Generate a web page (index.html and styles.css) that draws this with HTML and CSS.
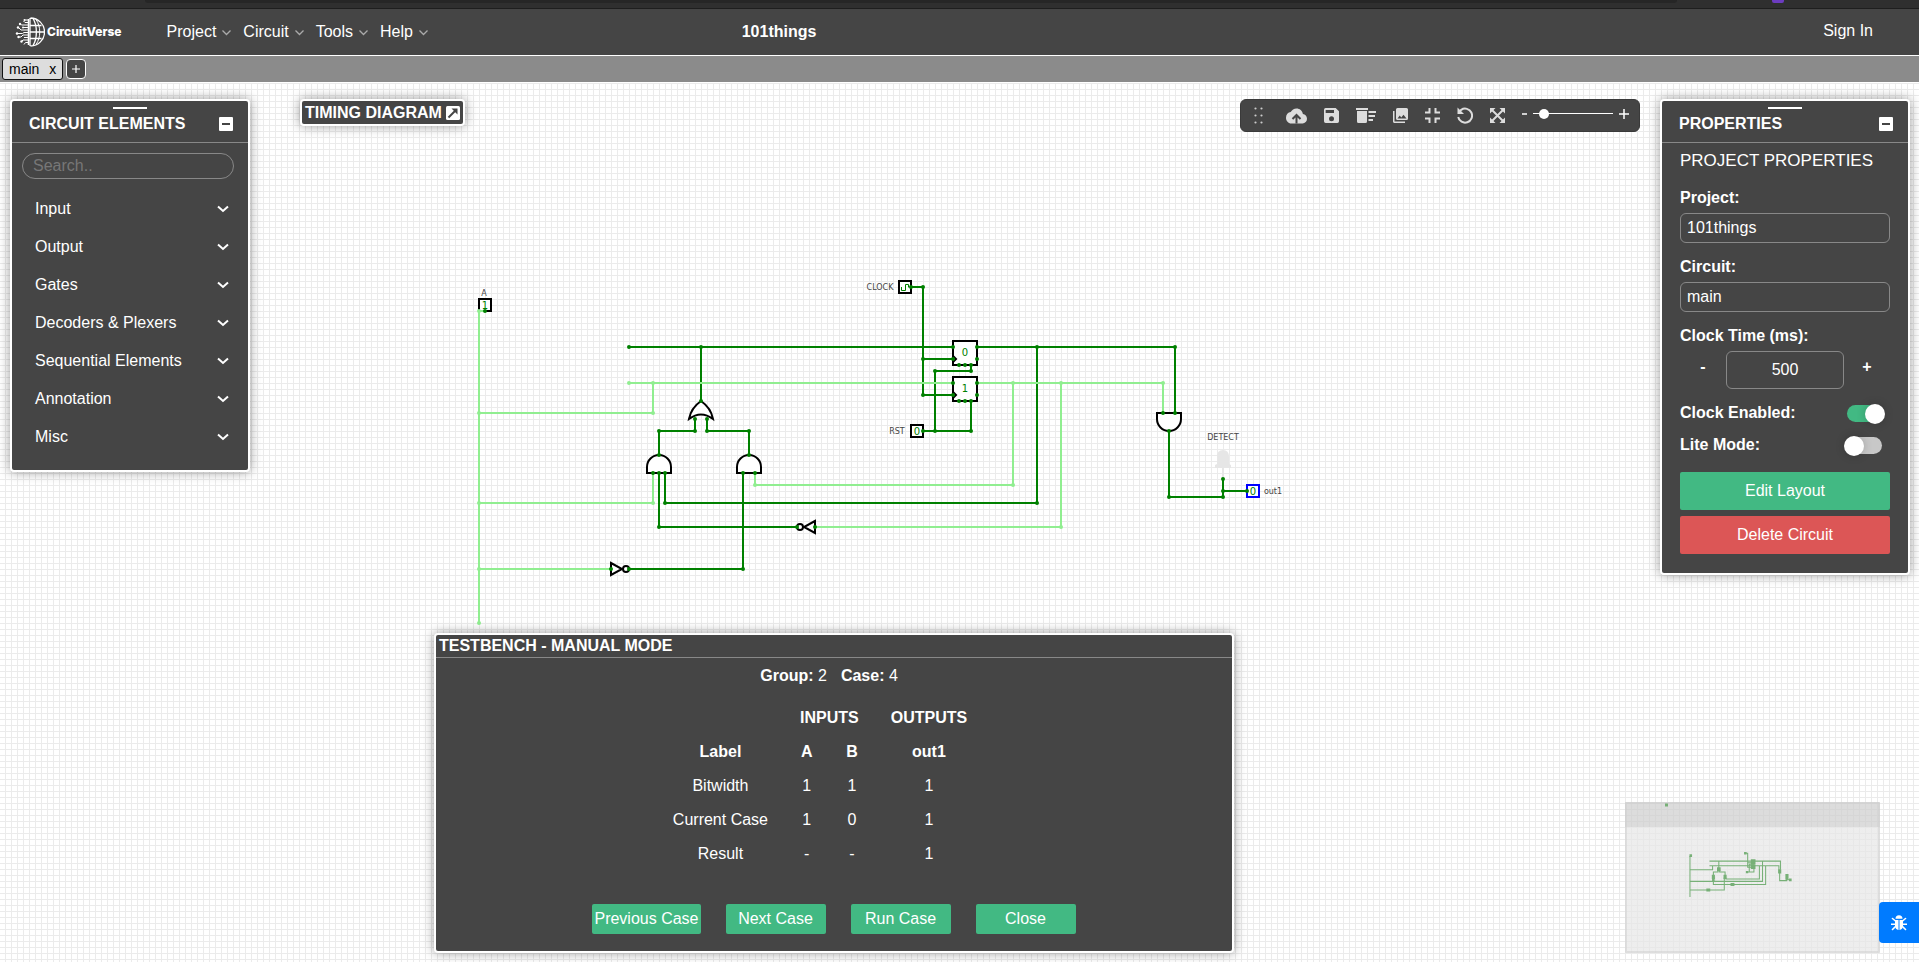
FILE: index.html
```html
<!DOCTYPE html>
<html lang="en">
<head>
<meta charset="utf-8">
<title>101things - CircuitVerse</title>
<link rel="stylesheet" href="styles.css">
</head>
<body>
<div class="chrome"><span class="chrome-bar"></span><span class="chrome-mark"></span></div>
<header class="navbar">
  <div class="nav-left">
    <a class="logo" href="#">
      <svg width="30" height="30" viewBox="0 0 30 30" fill="none" stroke="#fff">
        <path d="M15 1v28M15.500 1a14 14 0 0 1 0 28M18 1.500c4.500 7 4.500 20 0 27M15 8.500h11.500M15 15h14M15 21.500h11.500" stroke-width="1.300"/>
        <path d="M21 2.500c5 7 5 18 0 25" stroke-width="1"/>
        <path d="M13.500 2v26" stroke-width="1.500"/>
        <path d="M13 3H9.500M13 5.500H10L8.500 4M13 8H6.500L5 6.500M13 10.500H8M13 13H6L3.500 10.500H2M13 15.500H9L7.500 16.500H1M13 18H8L6 20H3M13 20.500H9M13 23H8L6.500 24.500M13 25.500H10.500L9 27.500"/>
        <g fill="#fff" stroke="none"><circle cx="9.500" cy="3" r="1"/><circle cx="5" cy="7" r="1.200"/><circle cx="3" cy="10.500" r="1.200"/><circle cx="2" cy="16.500" r="1.200"/><circle cx="3.500" cy="20" r="1.200"/><circle cx="6.500" cy="24.500" r="1.200"/><circle cx="8" cy="10.500" r="1"/></g>
      </svg>
      <span>CircuitVerse</span>
    </a>
    <nav class="menu">
      <button type="button">Project<svg class="caret" viewBox="0 0 9 6"><path d="M.5.500l4 4 4-4"/></svg></button>
      <button type="button">Circuit<svg class="caret" viewBox="0 0 9 6"><path d="M.5.500l4 4 4-4"/></svg></button>
      <button type="button">Tools<svg class="caret" viewBox="0 0 9 6"><path d="M.5.500l4 4 4-4"/></svg></button>
      <button type="button">Help<svg class="caret" viewBox="0 0 9 6"><path d="M.5.500l4 4 4-4"/></svg></button>
    </nav>
  </div>
  <h1 class="project-name">101things</h1>
  <a class="sign-in" href="#">Sign In</a>
</header>
<div class="tabs">
  <div class="tab"><span>main</span><button type="button" aria-label="Close main">x</button></div>
  <button class="tab-add" type="button" aria-label="Add circuit"><svg width="10" height="10" viewBox="0 0 10 10"><path d="M5 1v8M1 5h8" stroke="#fff" stroke-width="1.200"/></svg></button>
</div>
<main class="workspace">
  <svg class="circuit">
    <defs>
      <path id="wires-light" d="M485 311H479V623M479 413H653V383M629 383H953M977 383H1163V413M479 503H653V473M479 569H611M755 473V485H1013V383M815 527H1061V383"/>
      <path id="wires-dark" d="M629 347H953M977 347H1175V413M701 347V401M695 419V431H659V455M707 419V431H749V455M665 473V503H1037V347M659 473V527H797M629 569H743V473M911 287H923V395H953M923 359H953M971 365V371H935V431M923 431H971V401M1169 431V497H1223V479M1223 491H1247"/>
    </defs>
    <g transform="translate(0 -83)">
      <g class="part">
        <rect x="479" y="299" width="12" height="12"/>
        <rect x="899" y="281" width="12" height="12"/>
        <rect x="911" y="425" width="12" height="12"/>
        <rect x="953" y="341" width="24" height="24"/>
        <rect x="953" y="377" width="24" height="24"/>
        <path d="M953 356l3 3-3 3M953 392l3 3-3 3"/>
        <path d="M689 419q12-9 24 0-2-11-12-18-10 7-12 18z"/>
        <path d="M647 473V467a12 12 0 0 1 24 0V473z"/>
        <path d="M737 473V467a12 12 0 0 1 24 0V473z"/>
        <path d="M1157 413V419a12 12 0 0 0 24 0V413z"/>
        <path d="M611 563l11 6-11 6z"/><circle cx="626" cy="569" r="3"/>
        <path d="M815 521l-11 6 11 6z"/><circle cx="800" cy="527" r="3"/>
        <rect class="selected" x="1247" y="485" width="12" height="12"/>
      </g>
      <path class="clock-wave" d="M901.500 287v3.500h4v-6h3v3"/>
      <path d="M1217 464v-7q0-7 6-7t6 7v7l2 1v3h-16v-3z" fill="#e6e6e6"/><path d="M1223 468v10" stroke="#e6e6e6" stroke-width="2"/>
      <use href="#wires-dark" class="wire dark"/>
      <use href="#wires-light" class="wire light"/>
      <path class="node light" d="M479 311h0M479 413h0M479 503h0M479 569h0M479 623h0M629 383h0M653 383h0M653 413h0M653 503h0M755 485h0M1013 485h0M1013 383h0M1061 383h0M1061 527h0M1163 383h0"/>
      <path class="node dark" d="M485 311h0M629 347h0M701 347h0M701 401h0M695 419h0M707 419h0M695 431h0M707 431h0M659 431h0M749 431h0M659 455h0M749 455h0M653 473h0M659 473h0M665 473h0M743 473h0M755 473h0M665 503h0M659 527h0M797 527h0M815 527h0M611 569h0M629 569h0M743 569h0M911 287h0M923 287h0M923 359h0M923 395h0M953 347h0M953 359h0M953 383h0M953 395h0M977 347h0M977 359h0M977 383h0M977 395h0M959 365h0M965 365h0M971 365h0M959 401h0M965 401h0M971 401h0M971 371h0M935 371h0M935 431h0M923 431h0M971 431h0M1037 347h0M1037 503h0M1175 347h0M1175 413h0M1163 413h0M1169 431h0M1169 497h0M1223 497h0M1223 491h0M1223 479h0M1247 491h0"/>
      <g class="value">
        <text x="485" y="309">1</text><text x="965" y="356">0</text><text x="965" y="392">1</text><text x="917" y="435">0</text><text x="1253" y="495">0</text>
      </g>
      <g class="name">
        <text x="484" y="296">A</text><text x="880" y="290">CLOCK</text><text x="897" y="434">RST</text><text x="1223" y="440">DETECT</text><text x="1273" y="494">out1</text>
      </g>
    </g>
  </svg>

  <section class="panel elements">
    <header class="panel-head"><h2>CIRCUIT ELEMENTS</h2><button class="fold" type="button" aria-label="Collapse circuit elements"></button></header>
    <input class="search" type="text" placeholder="Search.." aria-label="Search circuit elements">
    <ul class="categories">
      <li><button type="button">Input<svg class="chevron" viewBox="0 0 12 8"><path d="M1 1.500l5 4.500 5-4.500"/></svg></button></li>
      <li><button type="button">Output<svg class="chevron" viewBox="0 0 12 8"><path d="M1 1.500l5 4.500 5-4.500"/></svg></button></li>
      <li><button type="button">Gates<svg class="chevron" viewBox="0 0 12 8"><path d="M1 1.500l5 4.500 5-4.500"/></svg></button></li>
      <li><button type="button">Decoders &amp; Plexers<svg class="chevron" viewBox="0 0 12 8"><path d="M1 1.500l5 4.500 5-4.500"/></svg></button></li>
      <li><button type="button">Sequential Elements<svg class="chevron" viewBox="0 0 12 8"><path d="M1 1.500l5 4.500 5-4.500"/></svg></button></li>
      <li><button type="button">Annotation<svg class="chevron" viewBox="0 0 12 8"><path d="M1 1.500l5 4.500 5-4.500"/></svg></button></li>
      <li><button type="button">Misc<svg class="chevron" viewBox="0 0 12 8"><path d="M1 1.500l5 4.500 5-4.500"/></svg></button></li>
    </ul>
  </section>

  <section class="panel timing">
    <h2>TIMING DIAGRAM</h2>
    <button type="button" aria-label="Open timing diagram"><svg width="14" height="14" viewBox="0 0 14 14"><rect width="14" height="14" rx="1.500" fill="#fff"/><path d="M2.500 11.500l7-7" stroke="#454545" stroke-width="2"/><path d="M5.500 2.500h6v6z" fill="#454545"/></svg></button>
  </section>

  <div class="toolbar">
    <svg class="grip" width="9" height="17" viewBox="0 0 9 17"><path d="M1.500 1.500h0M7.500 1.500h0M1.500 8.500h0M7.500 8.500h0M1.500 15.500h0M7.500 15.500h0" stroke="#ccc" stroke-width="2.200" stroke-linecap="round"/></svg>
    <button type="button" aria-label="Save online"><svg width="21" height="16" viewBox="0 0 21 16"><path d="M16.900 6C16.300 2.700 13.700.500 10.500.500 8 .500 5.800 2 4.700 4.100 2 4.400 0 6.700 0 9.700 0 12.800 2.400 15.500 5.200 15.500h11.400c2.400 0 4.400-2 4.400-4.700C21 8.300 19.200 6.200 16.900 6z" fill="#ddd"/><path d="M10.500 15.500V8M6.500 11l4-4 4 4" fill="none" stroke="#454545" stroke-width="2"/></svg></button>
    <button type="button" aria-label="Save offline"><svg width="15" height="15" viewBox="3 3 18 18"><path fill="#ddd" d="M17 3H5a2 2 0 0 0-2 2v14a2 2 0 0 0 2 2h14a2 2 0 0 0 2-2V7l-4-4zm-5 16a3 3 0 1 1 0-6 3 3 0 0 1 0 6zm3-10H5V5.500h10V9z"/></svg></button>
    <button type="button" aria-label="Delete selected"><svg width="20" height="15" viewBox="0 0 20 15" fill="#ddd"><path d="M0 0h12v2H0zM1 3h10v10.500q0 1.500-1.500 1.500h-7Q1 15 1 13.500zM12.500 3H20v2h-7.500zM12.500 7H19v2h-6.500zM12.500 11H17v2h-4.500z"/></svg></button>
    <button type="button" aria-label="Download image"><svg width="15" height="15" viewBox="2 2 20 20"><path fill="#ddd" d="M22 16V4a2 2 0 0 0-2-2H8a2 2 0 0 0-2 2v12c0 1.100.9 2 2 2h12a2 2 0 0 0 2-2zm-11-4l2 2.700 3-3.700 4 5H8l3-4zM2 6v14c0 1.100.9 2 2 2h14v-2H4V6H2z"/></svg></button>
    <button type="button" aria-label="Fit to screen"><svg width="15" height="15" viewBox="0 0 15 15"><path d="M0 4.500H4.500V0M10.500 0V4.500H15M0 10.500H4.500V15M15 10.500H10.500V15" fill="none" stroke="#ddd" stroke-width="2"/></svg></button>
    <button type="button" aria-label="Undo"><svg width="16" height="17" viewBox="0 0 16 17"><path d="M1.200 10a7 7 0 1 0 3-7.200L2 5" fill="none" stroke="#ddd" stroke-width="2"/><path d="M.5.500v6.500H7z" fill="#ddd"/></svg></button>
    <button type="button" aria-label="Full view"><svg width="15" height="15" viewBox="0 0 15 15"><path d="M2 2l11 11M13 2L2 13" stroke="#ddd" stroke-width="2"/><path d="M0 0h5.500L0 5.500zM15 0v5.500L9.500 0zM0 15V9.500L5.500 15zM15 15H9.500L15 9.500z" fill="#ddd"/></svg></button>
    <div class="zoom">
      <button type="button" aria-label="Zoom out"><svg width="5" height="10" viewBox="0 0 5 10"><path d="M0 5h5" stroke="#fff" stroke-width="1.500"/></svg></button>
      <input type="range" min="0" max="100" value="9" aria-label="Zoom">
      <button type="button" aria-label="Zoom in"><svg width="10" height="10" viewBox="0 0 10 10"><path d="M5 0v10M0 5h10" stroke="#fff" stroke-width="1.500"/></svg></button>
    </div>
  </div>

  <section class="panel properties">
    <header class="panel-head"><h2>PROPERTIES</h2><button class="fold" type="button" aria-label="Collapse properties"></button></header>
    <form class="props">
      <h3>PROJECT PROPERTIES</h3>
      <div class="field"><label for="project">Project:</label><input id="project" type="text" value="101things"></div>
      <div class="field"><label for="circuit">Circuit:</label><input id="circuit" type="text" value="main"></div>
      <div class="field"><label for="clock">Clock Time (ms):</label>
        <div class="stepper"><button type="button">-</button><input id="clock" type="number" value="500"><button type="button">+</button></div>
      </div>
      <div class="switch-row on"><label for="enabled">Clock Enabled:</label><input class="switch" id="enabled" type="checkbox" checked></div>
      <div class="switch-row"><label for="lite">Lite Mode:</label><input class="switch" id="lite" type="checkbox"></div>
      <div class="actions">
        <button class="btn" type="button">Edit Layout</button>
        <button class="btn danger" type="button">Delete Circuit</button>
      </div>
    </form>
  </section>

  <section class="panel testbench">
    <h2>TESTBENCH - MANUAL MODE</h2>
    <p class="case"><span><b>Group:</b> 2</span><span><b>Case:</b> 4</span></p>
    <table>
      <tr><th></th><th colspan="2">INPUTS</th><th>OUTPUTS</th></tr>
      <tr><th>Label</th><th>A</th><th>B</th><th>out1</th></tr>
      <tr><td>Bitwidth</td><td>1</td><td>1</td><td>1</td></tr>
      <tr><td>Current Case</td><td>1</td><td>0</td><td>1</td></tr>
      <tr><td>Result</td><td>-</td><td>-</td><td>1</td></tr>
    </table>
    <div class="case-actions">
      <button class="btn" type="button">Previous Case</button>
      <button class="btn" type="button">Next Case</button>
      <button class="btn" type="button">Run Case</button>
      <button class="btn" type="button">Close</button>
    </div>
  </section>

  <div class="minimap">
    <svg width="255" height="151" viewBox="0 0 255 151">
      <g transform="translate(2.700 14) scale(.13)">
        <use href="#wires-light"/><use href="#wires-dark"/>
        <path class="blocks" d="M475 295h20v20h-20zM895 277h20v20h-20zM909 423h18v18h-18zM947 333h36v36h-36zM947 371h36v36h-36zM687 395h28v30h-28zM647 451h24v34h-24zM737 451h24v34h-24zM1157 409h24v34h-24zM605 557h30v24h-30zM791 515h30v24h-30zM1213 447h24v44h-24zM1241 481h20v20h-20z"/>
      </g>
      <path class="blocks" d="M40 1.500h3v3h-3z"/>
    </svg>
  </div>
  <button class="report" type="button" aria-label="Report an issue">
    <svg width="16" height="16" viewBox="0 0 16 16" fill="#fff"><path d="M4.500 3.800a3.500 3.500 0 0 1 7 0zM4 5h3.500v10A4.500 4.500 0 0 1 4 11zM8.500 5H12v6a4.500 4.500 0 0 1-3.500 4z"/><path d="M4.500 6L1.500 3.500M11.500 6l3-2.500M4.500 9.200H.5M11.500 9.200h4M4.500 11.500l-3 3M11.500 11.500l3 3" stroke="#fff" stroke-width="1.600" stroke-linecap="round"/></svg>
  </button>
</main>
</body>
</html>
```

FILE: styles.css
```css
* { box-sizing: border-box; }

body {
  margin: 0;
  min-height: 100vh;
  display: flex;
  flex-direction: column;
  overflow: hidden;
  color: #fff;
  font: 16px/20px "Liberation Sans", Arial, sans-serif;
}

h1, h2, h3, p, ul { margin: 0; padding: 0; }
h1, h2 { font-size: 16px; line-height: 20px; }
ul { list-style: none; }
button, input { font: inherit; color: inherit; margin: 0; }
button { padding: 0; border: 0; background: none; }
a { color: inherit; text-decoration: none; }
svg { display: block; }

/* Top strip */
.chrome {
  display: flex;
  gap: 95px;
  height: 9px;
  padding: 0 135px 0 145px;
  background: #2f2f2f;
  border-bottom: 1px solid #1e1e1e;
}
.chrome-bar { flex: 1; height: 3px; background: #262626; border-radius: 0 0 8px 8px; }
.chrome-mark { width: 12px; height: 3px; background: #6c3cc0; border-radius: 0 0 2px 2px; }

/* Navigation */
.navbar {
  display: flex;
  align-items: center;
  height: 47px;
  padding-right: 46px;
  background: #454545;
  border-bottom: 1px solid #fff;
}
.nav-left { display: flex; align-items: center; width: 39.6%; padding-left: 15px; gap: 45px; }
.logo { display: flex; align-items: center; gap: 2px; font: 800 12px/16px Inter, sans-serif; }
.menu { display: flex; gap: 12px; }
.menu button { display: flex; align-items: center; gap: 6px; }
.caret { width: 9px; height: 6px; margin-top: 2px; fill: none; stroke: #aaa; stroke-width: 1.300; }
.project-name { font-weight: bold; }
.sign-in { margin-left: auto; padding-bottom: 2px; }

/* Circuit tabs */
.tabs {
  display: flex;
  align-items: center;
  gap: 3px;
  height: 27px;
  padding: 0 2px;
  background: #8b8b8b;
  border-bottom: 1px solid #fff;
  font-size: 14px;
}
.tab {
  display: flex;
  gap: 10px;
  padding: 0 6px;
  color: #000;
  background: #ddd;
  border: 1px solid #111;
  border-radius: 3px;
}
.tab-add {
  display: grid;
  place-items: center;
  width: 20px;
  height: 20px;
  background: #454545;
  border: 1px solid #fff;
  border-radius: 4px;
}

/* Canvas */
.workspace {
  position: relative;
  flex: 1;
  background-color: #fff;
  background-image:
    linear-gradient(#ebebeb 1px, transparent 1px),
    linear-gradient(90deg, transparent 5px, #ebebeb 5px);
  background-size: 6px 6px;
}
.circuit { position: absolute; inset: 0; width: 100%; height: 100%; }
.part { fill: #fff; stroke: #000; stroke-width: 2; }
.part .selected { stroke: #00f; }
.clock-wave { fill: none; stroke: green; stroke-width: 1; }
.wire { fill: none; stroke-width: 2; }
.node { stroke-width: 4; stroke-linecap: round; }
.dark { stroke: green; }
.light { stroke: #90ee90; }
.value { font-family: "DejaVu Sans", sans-serif; font-size: 10px; fill: green; text-anchor: middle; }
.name { font-family: "DejaVu Sans", sans-serif; font-size: 8px; fill: #444; text-anchor: middle; }

/* Floating panels */
.panel {
  position: absolute;
  background: #454545;
  border: 2px solid #fff;
  border-radius: 4px;
  box-shadow: 0 0 12px rgba(0, 0, 0, .4);
}
.panel-head {
  display: flex;
  justify-content: space-between;
  align-items: flex-end;
  height: 42px;
  padding: 0 15px 8px 17px;
  border-bottom: 1px solid #888;
  background: linear-gradient(#fff, #fff) center 6px / 34px 2px no-repeat;
}
.fold {
  width: 14px;
  height: 14px;
  margin-bottom: 3px;
  border-radius: 1px;
  background: linear-gradient(#454545, #454545) center / 8px 2px no-repeat #fff;
}

.elements { left: 10px; top: 16px; width: 240px; }
.search {
  display: block;
  width: calc(100% - 24px);
  height: 26px;
  margin: 10px 14px 11px 10px;
  padding: 0 10px;
  background: transparent;
  border: 1px solid #888;
  border-radius: 13px;
}
.search::placeholder { color: #777; }
.categories { padding-bottom: 14px; }
.categories button {
  display: flex;
  justify-content: space-between;
  align-items: center;
  width: 100%;
  height: 38px;
  padding: 0 19px 0 23px;
}
.chevron { width: 12px; height: 8px; fill: none; stroke: #fff; stroke-width: 2; }

.timing {
  left: 300px;
  top: 16px;
  display: flex;
  align-items: center;
  gap: 4px;
  padding: 2px 3px 1px;
}

.toolbar {
  position: absolute;
  right: 279px;
  top: 16px;
  display: flex;
  align-items: center;
  gap: 17px;
  height: 33px;
  padding: 0 10px 0 13px;
  background: #454545;
  border: 1px solid #3a3a3a;
  border-radius: 6px;
}
.grip { margin-right: 6px; }
.zoom { display: flex; align-items: center; gap: 6px; padding-bottom: 4px; }
.zoom input {
  appearance: none;
  width: 80px;
  height: 10px;
  background: linear-gradient(#fff, #fff) center / 100% 1px no-repeat;
}
.zoom input::-webkit-slider-thumb {
  appearance: none;
  width: 10px;
  height: 10px;
  background: #fff;
  border-radius: 50%;
}

.properties { right: 9px; top: 16px; width: 250px; }
.props { padding: 8px 18px 19px; }
.props h3 { font-size: 17px; line-height: 20px; font-weight: normal; white-space: nowrap; }
.props label { font-weight: bold; }
.field { display: flex; flex-direction: column; gap: 5px; margin-top: 14px; }
.props h3 + .field { margin-top: 17px; }
.field input {
  width: 100%;
  height: 30px;
  padding: 0 6px;
  background: transparent;
  border: 1px solid #888;
  border-radius: 6px;
}
.stepper { display: flex; justify-content: space-between; }
.stepper button { width: 46px; padding-bottom: 6px; font-weight: bold; }
.stepper input { width: 118px; height: 38px; text-align: center; appearance: textfield; }
.stepper input::-webkit-inner-spin-button { appearance: none; margin: 0; }
.switch-row {
  display: flex;
  justify-content: space-between;
  align-items: center;
  margin-top: 12px;
  padding-right: 8px;
}
.switch-row.on { margin-top: 14px; padding-right: 7px; }
.switch {
  appearance: none;
  width: 36px;
  height: 17px;
  background: #c8c8c8;
  border-radius: 9px;
}
.switch::before {
  content: "";
  display: block;
  width: 20px;
  height: 20px;
  margin: -1px 0 0 -2px;
  background: #fff;
  border-radius: 50%;
  box-shadow: 0 0 10px rgba(0, 0, 0, .2);
}
.switch:checked { background: #42b983; }
.switch:checked::before { margin-left: 18px; }
.actions { display: grid; gap: 6px; margin-top: 17px; }
.actions .btn { height: 38px; }
.btn { background: #42b983; border-radius: 2px; }
.btn.danger { background: #dc5656; }

.testbench {
  left: 434px;
  bottom: 9px;
  width: 800px;
  display: flex;
  flex-direction: column;
  align-items: center;
}
.testbench h2 { align-self: stretch; padding: 1px 3px; border-bottom: 1px solid #888; }
.case { display: flex; gap: 14px; margin-top: 8px; padding-right: 10px; }
.testbench table { margin: 15px 28px 33px 0; border-collapse: collapse; text-align: center; }
.testbench th, .testbench td { height: 34px; padding: 0 16px; }
.case-actions { display: flex; gap: 25px; padding-bottom: 17px; }
.case-actions .btn { min-width: 100px; height: 30px; padding: 0 2px; }

.minimap {
  position: absolute;
  right: 39px;
  bottom: 9px;
  background: linear-gradient(rgba(205, 205, 205, .7) 25px, rgba(230, 230, 230, .7) 25px);
  border-radius: 1px;
  box-shadow: inset 0 0 0 2px rgba(205, 205, 205, .5);
}
.minimap use { fill: none; stroke: #77b077; stroke-width: 8; }
.minimap .blocks { fill: #77b077; }

.report {
  position: absolute;
  right: 0;
  bottom: 19px;
  display: grid;
  place-items: center;
  width: 40px;
  height: 41px;
  background: #007bff;
  border-radius: 4px 0 0 4px;
}
```
